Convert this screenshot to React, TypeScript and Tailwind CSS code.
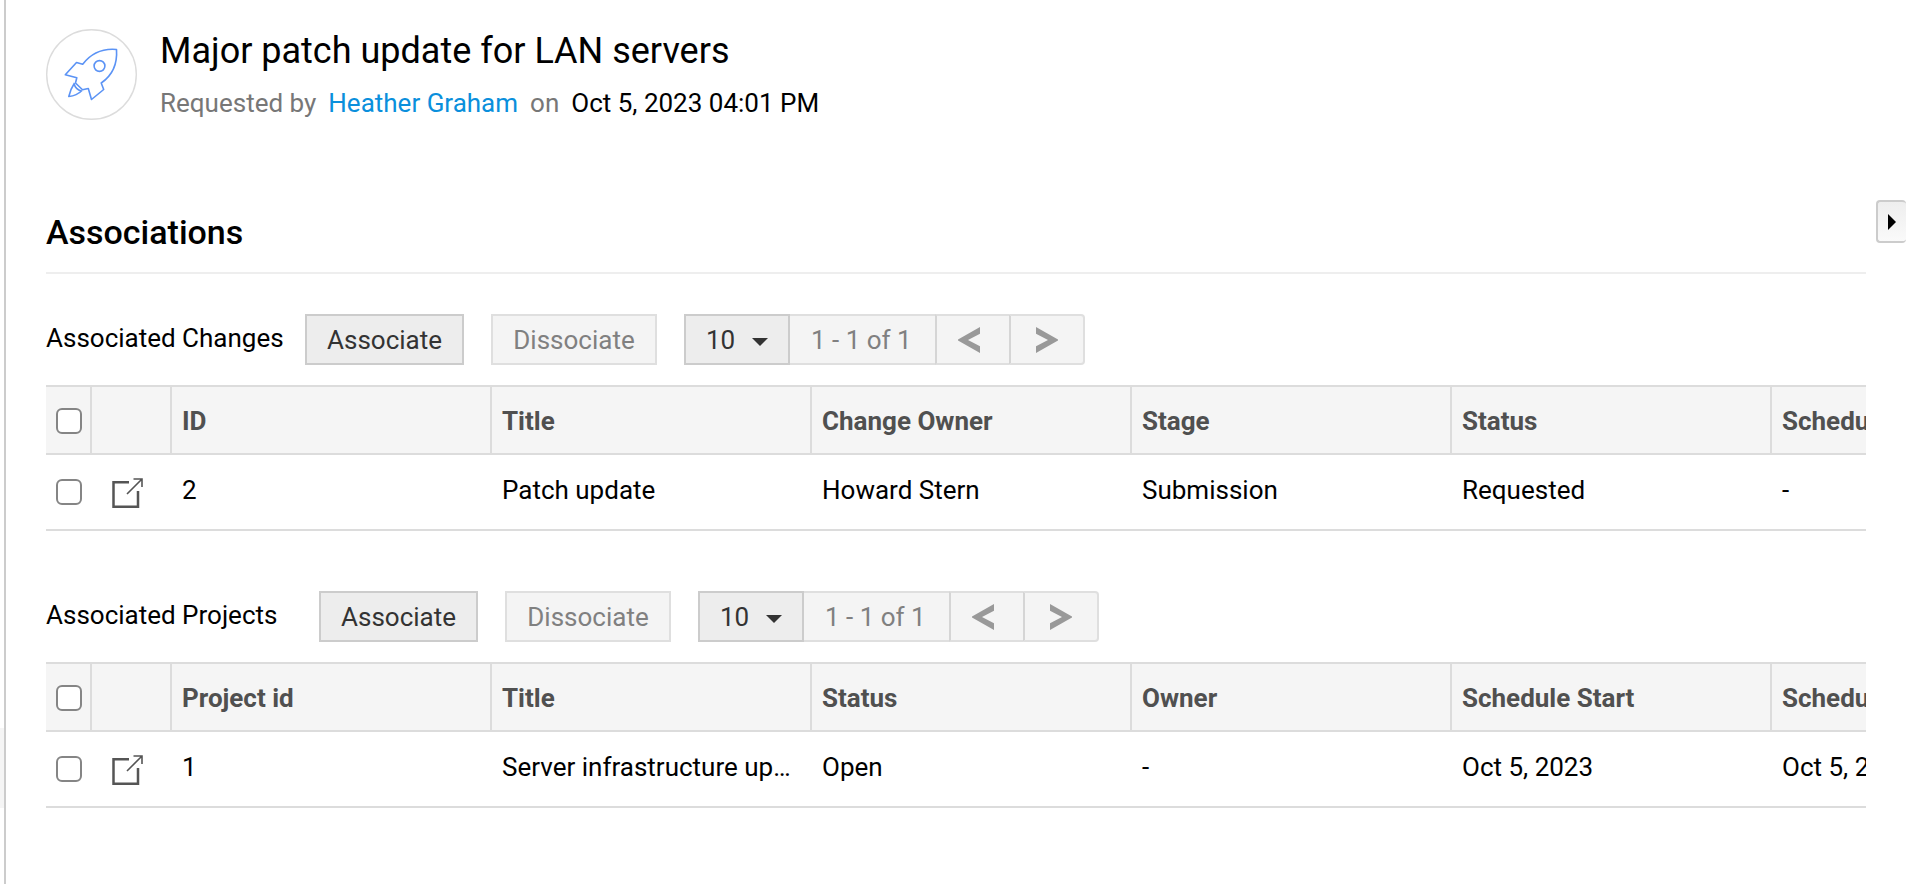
import { useState } from "react";

type Section = {
  id: string;
  label: string;
  labelClass: string;
  columns: string[];
  row: string[];
};

const sections: Section[] = [
  {
    id: "changes",
    label: "Associated Changes",
    labelClass: "w-[259px]",
    columns: ["ID", "Title", "Change Owner", "Stage", "Status", "Schedule Start"],
    row: ["2", "Patch update", "Howard Stern", "Submission", "Requested", "-"],
  },
  {
    id: "projects",
    label: "Associated Projects",
    labelClass: "w-[273px]",
    columns: ["Project id", "Title", "Status", "Owner", "Schedule Start", "Schedule End"],
    row: ["1", "Server infrastructure upgrade", "Open", "-", "Oct 5, 2023", "Oct 5, 2023"],
  },
];

function RocketIcon() {
  return (
    <svg
      viewBox="0 0 91 91"
      className="size-[91px] shrink-0"
      fill="none"
      stroke="#5b93f5"
      strokeWidth="1.6"
      strokeLinejoin="round"
      aria-hidden="true"
    >
      <circle cx="45.500" cy="45.500" r="44.800" stroke="#dcdcdc" strokeWidth="1.400" />
      <path d="M36.700 35.300C45 24.500 57 19.300 70.500 20.500C71.500 35 67 46 55.200 54L57.700 60.500L45.500 70.500L42.300 59.500L36.500 60.800L29.500 54L30.800 48.800L19.300 45.800L30.500 33.500Z" />
      <circle cx="53.500" cy="37" r="5.400" />
      <path d="M28.500 54C25.500 58.500 24 62.500 22.800 67.500C28 67 32 65.500 36 61.500M28 54.500C29 58.500 31.500 61 35.500 62" />
    </svg>
  );
}

function OpenIcon() {
  return (
    <svg viewBox="0 0 32 32" className="size-8" fill="none" stroke="#555" aria-hidden="true">
      <path d="M17 6.200H1.500V30.800H26V15" strokeWidth="2.500" />
      <path d="M15 18L30 3M21.500 3H30V11" strokeWidth="1.600" />
    </svg>
  );
}

function Chevron({ direction }: { direction: "left" | "right" }) {
  return (
    <svg viewBox="0 0 22 26" className="h-[26px] w-[22px]" fill="#999" aria-hidden="true">
      {direction === "left" ? (
        <path d="M22 0V6.800L10 13L22 19.200V26L0 13.500V12.500Z" />
      ) : (
        <path d="M0 0V6.800L12 13L0 19.200V26L22 13.500V12.500Z" />
      )}
    </svg>
  );
}

function Check({ label }: { label: string }) {
  return (
    <input
      type="checkbox"
      aria-label={label}
      className="block size-[26px] appearance-none rounded-md border-2 border-[#858585] bg-white checked:bg-[#0a8fdc]"
    />
  );
}

function Toolbar({ section }: { section: Section }) {
  const [size, setSize] = useState("10");
  return (
    <div className="flex h-[51px] items-center">
      <h3 className={`${section.labelClass} shrink-0 pb-1`}>{section.label}</h3>
      <button type="button" className="h-full w-[159px] border-2 border-[#ccc] bg-[#ededed] text-[#333]">
        Associate
      </button>
      <button
        type="button"
        disabled
        className="ml-[27px] h-full w-[166px] border-2 border-[#dfdfdf] bg-[#f4f4f4] text-[#808080]"
      >
        Dissociate
      </button>
      <div className="ml-[27px] flex h-full text-[#808080]">
        <div className="relative h-full w-[106px]">
          <select
            aria-label={`${section.label} per page`}
            value={size}
            onChange={(e) => setSize(e.target.value)}
            className="h-full w-full appearance-none border-2 border-[#ccc] bg-[#ededed] pl-5 text-[#333]"
          >
            <option>10</option>
            <option>25</option>
            <option>50</option>
          </select>
          <svg
            viewBox="0 0 16 8"
            className="pointer-events-none absolute top-6 right-[22px] h-2 w-4"
            fill="#333"
            aria-hidden="true"
          >
            <path d="M0 0H16L8 8Z" />
          </svg>
        </div>
        <span className="flex w-[145px] items-center border-y-2 border-[#dfdfdf] bg-[#f4f4f4] pl-[21px]">
          1 - 1 of 1
        </span>
        <button
          type="button"
          disabled
          aria-label="Previous page"
          className="flex w-[74px] items-center justify-center border-y-2 border-l-2 border-y-[#dfdfdf] border-l-[#d5d5d5] bg-[#f4f4f4] pr-2"
        >
          <Chevron direction="left" />
        </button>
        <button
          type="button"
          disabled
          aria-label="Next page"
          className="flex w-[76px] items-center justify-center rounded-r border-2 border-[#dfdfdf] border-l-[#d5d5d5] bg-[#f4f4f4]"
        >
          <Chevron direction="right" />
        </button>
      </div>
    </div>
  );
}

function AssociationTable({ section }: { section: Section }) {
  return (
    <div className="mt-5 overflow-hidden">
      <table className="w-[2046px] table-fixed border-separate border-spacing-0">
        <colgroup>
          <col className="w-[46px]" />
          <col className="w-20" />
          {section.columns.map((c) => (
            <col key={c} className="w-80" />
          ))}
        </colgroup>
        <thead>
          <tr className="h-[70px] bg-[#f5f5f5] text-left text-[#505050]">
            <th className="border-y-2 border-r-2 border-[#dcdcdc] pt-0.5 pl-[10px]">
              <Check label={`Select all ${section.id}`} />
            </th>
            <th className="border-y-2 border-r-2 border-[#dcdcdc]" aria-label="Open" />
            {section.columns.map((c) => (
              <th key={c} className="border-y-2 border-r-2 border-[#dcdcdc] px-[10px] pt-0.5 font-bold">
                {c}
              </th>
            ))}
          </tr>
        </thead>
        <tbody>
          <tr className="h-[76px]">
            <td className="border-b-2 border-[#dcdcdc] pl-[10px]">
              <Check label={`Select ${section.row[1]}`} />
            </td>
            <td className="border-b-2 border-[#dcdcdc] pl-5">
              <a href="#open" className="block" aria-label={`Open ${section.row[1]}`}>
                <OpenIcon />
              </a>
            </td>
            {section.row.map((v, i) => (
              <td key={i} className="truncate border-b-2 border-[#dcdcdc] px-[10px] pb-1">
                {v}
              </td>
            ))}
          </tr>
        </tbody>
      </table>
    </div>
  );
}

export default function App() {
  return (
    <div className="flex min-h-screen bg-white font-['Roboto',sans-serif] text-[26px] leading-8 text-black">
      <div className="w-1 shrink-0 pt-[728px]">
        <div className="h-20 bg-[#f5f5f5]" />
      </div>
      <main className="min-w-0 flex-1 border-l-2 border-[#ccc] pl-10">
        <header className="flex gap-[23px] pt-[29px]">
          <RocketIcon />
          <div>
            <h1 className="text-[36px] leading-[44px]">Major patch update for LAN servers</h1>
            <p className="mt-[14px] flex gap-3 text-[#777]">
              <span>Requested by</span>
              <a href="#requester" className="text-[#0a8fdc]">
                Heather Graham
              </a>
              <span>on</span>
              <time className="text-black">Oct 5, 2023 04:01 PM</time>
            </p>
          </div>
        </header>
        <h2 className="mt-[92px] border-b-2 border-[#eee] pb-5 text-[34px] leading-10 font-medium">
          Associations
        </h2>
        <div className="flex flex-col gap-[60px] pt-10">
          {sections.map((s) => (
            <section key={s.id}>
              <Toolbar section={s} />
              <AssociationTable section={s} />
            </section>
          ))}
        </div>
      </main>
      <aside className="flex w-10 shrink-0 items-start justify-end pt-[200px]">
        <button
          type="button"
          aria-label="Expand side panel"
          className="flex h-[43px] w-[30px] items-center rounded border-y-2 border-l-2 border-[#ccc] bg-linear-to-b from-[#eee] to-[#fafafa] pl-[10px]"
        >
          <svg viewBox="0 0 8 16" className="h-4 w-2" fill="#000" aria-hidden="true">
            <path d="M0 0L8 8L0 16Z" />
          </svg>
        </button>
      </aside>
    </div>
  );
}
